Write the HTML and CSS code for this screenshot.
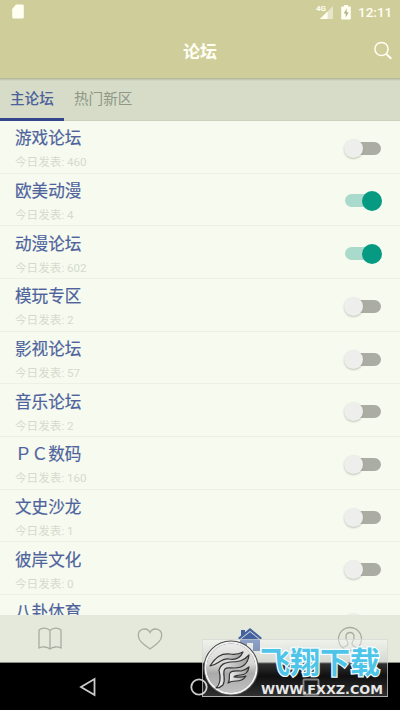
FILE: index.html
```html
<!DOCTYPE html>
<html lang="zh-CN">
<head>
<meta charset="utf-8">
<title>论坛</title>
<link rel="stylesheet" href="styles.css">
</head>
<body>
<div class="phone">
  <header class="header">
    <div class="status">
      <svg class="sd" width="12" height="15" viewBox="0 0 12 15"><path d="M4 0.5h6.5a1.3 1.3 0 0 1 1.3 1.3v11.4a1.3 1.3 0 0 1-1.3 1.3h-9A1.3 1.3 0 0 1 .2 13.200V5z"/></svg>
      <svg class="signal" width="18" height="16" viewBox="0 0 18 16"><path class="faint" d="M17 2v13H4z"/><path d="M11.500 7.500V15H4z"/><text x="0" y="7">4G</text></svg>
      <svg class="battery" width="10" height="15" viewBox="0 0 10 15"><path d="M3 0h4v1.500h2a.8.8 0 0 1 .8.8v11.400a.8.8 0 0 1-.8.8H1a.8.8 0 0 1-.8-.8V2.300a.8.8 0 0 1 .8-.8h2z"/><path class="bolt" d="M5.700 3.500L2.700 8.500h2v4l3-5.200h-2z"/></svg>
      <span class="clock">12:11</span>
    </div>
    <div class="titlebar">
      <h1>论坛</h1>
      <svg class="search" width="20" height="20" viewBox="0 0 20 20"><circle cx="8.500" cy="8" r="6.600"/><path d="M13.300 13l5 4.800"/></svg>
    </div>
  </header>
  <nav class="tabs"><span class="tab active">主论坛</span><span class="tab">热门新区</span></nav>
  <main class="list">
    <div class="row"><div><h2>游戏论坛</h2><p>今日发表: 460</p></div><i class="switch"></i></div>
    <div class="row"><div><h2>欧美动漫</h2><p>今日发表: 4</p></div><i class="switch on"></i></div>
    <div class="row"><div><h2>动漫论坛</h2><p>今日发表: 602</p></div><i class="switch on"></i></div>
    <div class="row"><div><h2>模玩专区</h2><p>今日发表: 2</p></div><i class="switch"></i></div>
    <div class="row"><div><h2>影视论坛</h2><p>今日发表: 57</p></div><i class="switch"></i></div>
    <div class="row"><div><h2>音乐论坛</h2><p>今日发表: 2</p></div><i class="switch"></i></div>
    <div class="row"><div><h2>ＰＣ数码</h2><p>今日发表: 160</p></div><i class="switch"></i></div>
    <div class="row"><div><h2>文史沙龙</h2><p>今日发表: 1</p></div><i class="switch"></i></div>
    <div class="row"><div><h2>彼岸文化</h2><p>今日发表: 0</p></div><i class="switch"></i></div>
    <div class="row"><div><h2>八卦体育</h2></div><i class="switch"></i></div>
  </main>
  <footer class="bottom">
    <span><svg width="26" height="26" viewBox="0 0 26 26"><path d="M13 4.500C10 1.500 5 1.500 2 4v18c3-1.500 8-1.500 11 1 3-2.500 8-2.500 11-1V4c-3-2.500-8-2.500-11 .5zM13 4.500V23"/></svg></span>
    <span><svg width="26" height="26" viewBox="0 0 26 26"><path d="M13 23C7 18.500 1.300 15 1.300 9.500 1.300 2.500 10 .8 13 6.500 16 .8 24.700 2.500 24.700 9.500 24.700 15 19 18.500 13 23z"/></svg></span>
    <span><svg class="home" width="26" height="26" viewBox="0 0 26 26"><path d="M13 2l12 10-1.500 1.500L13 5 2.500 13.500 1 12l3-2.500V4h4v2.200z"/><path d="M13 6l10 8V25h-7v-8h-6v8H3V14z"/></svg></span>
    <span><svg width="26" height="26" viewBox="0 0 26 26"><path d="M5.500 21.500C9 20.500 11.500 19 11 17 7.500 12 8.500 6.500 13 6.500s5.500 5.500 2 10.500c-.5 2 2 3.500 5.500 4.500"/><circle cx="13" cy="13" r="11.500"/></svg></span>
  </footer>
  <div class="system">
    <span><svg width="18" height="20" viewBox="0 0 18 20"><path d="M15.500 2v16L2 10z"/></svg></span>
    <span><svg width="18" height="18" viewBox="0 0 18 18"><circle cx="9" cy="9" r="7.700"/></svg></span>
    <span><svg class="recent" width="18" height="18" viewBox="0 0 18 18"><rect x="1.500" y="1.500" width="15" height="15" rx="1"/></svg></span>
  </div>
  <div class="badge">
    <svg class="emblem" width="56" height="56" viewBox="0 0 56 56">
      <defs>
        <linearGradient id="disc" x1="0" y1="0" x2="0" y2="1"><stop offset="0" stop-color="#ededeb"/><stop offset=".42" stop-color="#d6d6d4"/><stop offset=".6" stop-color="#aaa"/><stop offset="1" stop-color="#c2c2c2"/></linearGradient>
        <linearGradient id="wing" x1="0" y1="0" x2="1" y2="0"><stop offset="0" stop-color="#f1f1f1"/><stop offset="1" stop-color="#9d9d9d"/></linearGradient>
      </defs>
      <circle cx="28" cy="28" r="26" fill="url(#disc)" stroke="#4a4a4a" stroke-width="3"/>
      <circle cx="28" cy="28" r="25.500" fill="none" stroke="#f2f2f2" stroke-width="2"/>
      <g fill="url(#wing)" stroke="#333" stroke-width="1.200" stroke-linejoin="round">
        <path d="M13 48c5-4 5-10 3-18 2-6 5-7 11-8 8 0 14-1 19-7-1 9-6 13-15 13-6 0-9-1-10 3-1 5 2 9-1 14-2 2-4 3-7 3z"/>
        <path d="M25 43c3-4 0-7 2-10 2-3 6-2 11-2 4-1 6-2 8-4-1 7-5 8-9 8-3 1-5 0-6 2 4 0 8 1 12-1-3 5-7 5-10 5s-5 0-8 2z"/>
        <path d="M7 26c6-9 11-13 20-12 5 1 9 0 13-2-3 7-8 8-14 7-8-1-11 6-19 7z"/>
      </g>
    </svg>
    <div class="words"><strong>飞翔下载</strong><svg class="site" width="126" height="16" viewBox="0 0 126 16"><text x="1" y="13.500" textLength="122" lengthAdjust="spacingAndGlyphs">WWW.FXXZ.COM</text></svg></div>
  </div>
</div>
</body>
</html>
```
FILE: styles.css
```css
* { box-sizing: border-box; }
body { margin: 0; font-family: Roboto, "Noto Sans CJK SC", sans-serif; }
h1, h2, p { margin: 0; }
svg { display: block; flex: none; }
.phone { position: relative; width: 400px; height: 710px; overflow: hidden; display: flex; flex-direction: column; background: #f7fbef; }
.header { height: 78px; flex: none; background: #cfcd9a; }
.status { height: 24px; display: flex; align-items: center; padding: 0 8px 0 12px; color: #fffff2; }
.status svg { fill: #fffff2; }
.sd { margin-top: -1px; }
.signal { margin-left: auto; margin-right: 7px; }
.signal text { font-size: 8px; font-weight: 700; }
.status .faint { fill: #e7e6ca; }
.status .bolt { fill: #b5b28b; }
.battery { margin-right: 7px; }
.clock { font-size: 13.5px; font-weight: 500; line-height: 24px; width: 34px; white-space: nowrap; }
.titlebar { height: 54px; display: grid; grid-template-columns: 40px 1fr 40px; align-items: center; }
h1 { grid-column: 2; padding-top: 2px; text-align: center; color: #fffff4; font-size: 17px; line-height: 24px; font-weight: 700; }
.search { margin: -1px 0 0 13px; fill: none; stroke: #fffff2; stroke-width: 1.5; }
.search path { stroke-width: 2; }
.tabs { height: 43px; flex: none; display: flex; background: linear-gradient(#b1b39a, #d6dcc7 3px); border-bottom: 1px solid #cbd1bd; }
.tab { padding: 0 10px; height: 43px; font-size: 14.6px; line-height: 42px; color: #8f9787; white-space: nowrap; }
.tab.active { width: 64px; color: #4c619b; font-weight: 500; border-bottom: 3px solid #35478c; }
.list { height: 494px; flex: none; overflow: hidden; }
.row { height: 52.67px; padding: 6.4px 18px 0 15px; display: flex; justify-content: space-between; border-bottom: 1px solid #edf1e5; }
h2 { color: #4e639d; font-size: 16.6px; line-height: 24px; font-weight: 400; -webkit-text-stroke: .2px #4e639d; }
.row p { color: #d5dacd; font-size: 11.6px; line-height: 16px; margin-top: 3px; }
.switch { position: relative; width: 36px; height: 13px; border-radius: 7px; margin: 14.6px 1px 0 0; background: #abada4; }
.switch::after { content: ""; position: absolute; left: -1px; top: -3px; width: 19px; height: 19px; border-radius: 50%; background: #eeeeed; box-shadow: 0 1px 2px #999d9199; }
.switch.on { background: #a9dacb; margin-top: 14px; }
.switch.on::after { left: 17px; width: 20px; height: 20px; background: #069a83; box-shadow: none; }
.bottom { height: 48px; flex: none; display: grid; grid-template-columns: repeat(4, 1fr); background: #e5e9dc; border-bottom: 1px solid #8b8e83; }
.bottom span { display: flex; justify-content: center; padding-top: 11px; }
.bottom svg { fill: none; stroke: #a8aca1; stroke-width: 1.3; }
.bottom .home { fill: #4462a0; stroke: none; }
.system { flex: 1; background: #000; display: grid; grid-template-columns: repeat(3, 111.5px); padding-left: 32px; }
.system span { display: flex; justify-content: center; align-items: center; }
.system svg { fill: none; stroke: #ccc; stroke-width: 1.8; }
.system .recent { stroke: #777; }
.badge { position: absolute; left: 202px; top: 639px; width: 186px; height: 58px; background: linear-gradient(#ffffff66 0, #bbbbbb66 24px, #ffffff30 24px, #ffffff10 36px, #ffffff30); border: 1px solid #d5d5d5aa; display: flex; }
.words { width: 126px; margin-left: 1px; }
.words strong { display: block; height: 40px; font-size: 30px; line-height: 45px; font-weight: 700; white-space: nowrap; color: #4ec5e8; -webkit-text-stroke: 2.5px #f4fcff; paint-order: stroke fill; }
.site { overflow: visible; }
.site text { font: 700 12.5px "DejaVu Sans", sans-serif; fill: #e8e8e8; }
```
